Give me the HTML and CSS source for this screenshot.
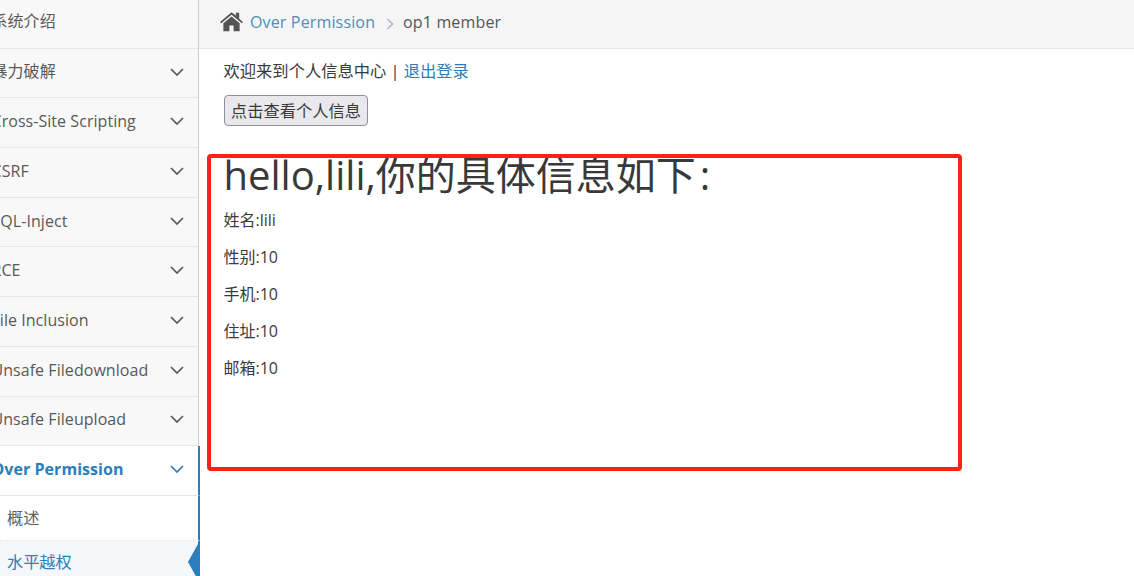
FILE: index.html
```html
<!DOCTYPE html>
<html lang="zh">
<head>
<meta charset="utf-8">
<title>Over Permission</title>
<link rel="stylesheet" href="styles.css">
</head>
<body>
<div class="layout">
  <nav class="sidebar">
    <ul class="menu">
      <li class="item"><span class="label cjk">系统介绍</span></li>
      <li class="item"><span class="label cjk">暴力破解</span><svg class="chev" viewBox="0 0 14 8"><path d="M1 1l6 6 6-6"/></svg></li>
      <li class="item"><span class="label">Cross-Site Scripting</span><svg class="chev" viewBox="0 0 14 8"><path d="M1 1l6 6 6-6"/></svg></li>
      <li class="item"><span class="label">CSRF</span><svg class="chev" viewBox="0 0 14 8"><path d="M1 1l6 6 6-6"/></svg></li>
      <li class="item"><span class="label">SQL-Inject</span><svg class="chev" viewBox="0 0 14 8"><path d="M1 1l6 6 6-6"/></svg></li>
      <li class="item"><span class="label">RCE</span><svg class="chev" viewBox="0 0 14 8"><path d="M1 1l6 6 6-6"/></svg></li>
      <li class="item"><span class="label">File Inclusion</span><svg class="chev" viewBox="0 0 14 8"><path d="M1 1l6 6 6-6"/></svg></li>
      <li class="item"><span class="label">Unsafe Filedownload</span><svg class="chev" viewBox="0 0 14 8"><path d="M1 1l6 6 6-6"/></svg></li>
      <li class="item"><span class="label">Unsafe Fileupload</span><svg class="chev" viewBox="0 0 14 8"><path d="M1 1l6 6 6-6"/></svg></li>
      <li class="item open"><span class="label">Over Permission</span><svg class="chev" viewBox="0 0 14 8"><path d="M1 1l6 6 6-6"/></svg></li>
      <li class="sub">概述</li>
      <li class="sub current">水平越权<span class="pointer"></span></li>
    </ul>
  </nav>
  <main class="main">
    <div class="crumbs">
      <svg class="home" viewBox="0 0 24 20"><path d="M12 1.200 1 10.400l1.100 1.300L12 3.600l9.900 8.100 1.100-1.300-3.600-3V1.600h-3.200v2.700z"/><path d="M12 5.300 4.200 11.700V19.400h5.800v-5.600h4V19.400h5.800V11.700z"/></svg>
      <a class="crumb-link" href="#">Over Permission</a>
      <svg class="sep" viewBox="0 0 8 12"><path d="M1.500 1l5 5-5 5"/></svg>
      <span class="crumb-now">op1 member</span>
    </div>
    <div class="content">
      <p class="welcome">欢迎来到个人信息中心 | <a href="#">退出登录</a></p>
      <button class="btn" type="button">点击查看个人信息</button>
      <h1 class="title">hello,lili,你的具体信息如下<span class="colon">:</span></h1>
      <p class="row">姓名:lili</p>
      <p class="row">性别:10</p>
      <p class="row">手机:10</p>
      <p class="row">住址:10</p>
      <p class="row">邮箱:10</p>
    </div>
  </main>
</div>
<div class="mark"></div>
</body>
</html>
```
FILE: styles.css
```css
* { box-sizing: border-box; }
html, body { margin: 0; height: 100%; overflow: hidden; }
body {
  position: relative;
  background: #fff;
  color: #393939;
  font-family: "Open Sans", "Noto Sans CJK SC", sans-serif;
  font-size: 16px;
}
a { color: #337ab7; text-decoration: none; }
.layout { display: flex; height: 576px; }
.sidebar {
  flex: 0 0 200px;
  height: 576px;
  overflow: hidden;
}
.menu { list-style: none; margin: -1px 0 0; padding: 0; }
.item {
  display: flex;
  align-items: center;
  justify-content: space-between;
  height: 49.7px;
  margin-right: 1px;
  padding: 0 14px 3px 0;
  background: #f8f8f8;
  border-right: 1px solid #ccc;
  border-bottom: 1px solid #e5e5e5;
  color: #585858;
  white-space: nowrap;
}
.label { margin-left: -8.5px; letter-spacing: 0.05px; }
.cjk { padding-bottom: 3px; }
.chev { width: 14px; height: 8px; fill: none; stroke: #585858; stroke-width: 1.7; }
.item.open {
  margin-right: 0;
  background: #fff;
  color: #2b7dbc;
  font-weight: 700;
  border-right: 2px solid #2b7dbc;
}
.item.open .chev { stroke: #2b7dbc; }
.sub {
  position: relative;
  height: 45px;
  padding: 9px 0 0 7px;
  background: #fff;
  color: #616161;
  font-size: 16.2px;
  border-right: 2px solid #2b7dbc;
  border-bottom: 1px dotted #e4e4e4;
}
.sub.current { background: #f5f7fa; color: #2b7dbc; height: 36px; padding-top: 8px; border-bottom: 0; }
.pointer {
  position: absolute;
  right: 0;
  top: 3px;
  border-style: solid;
  border-color: transparent #2b7dbc transparent transparent;
  border-width: 18px 10px 18px 0;
}
.main { flex: 1; min-width: 0; margin-left: -1px; }
.crumbs {
  display: flex;
  align-items: center;
  height: 49px;
  padding: 0 0 5px 20px;
  background: #f5f5f5;
  border-bottom: 1px solid #e5e5e5;
  letter-spacing: 0.15px;
}
.home { width: 25px; height: 21px; fill: #555; margin-right: 6px; }
.crumb-link { color: #4c8fbd; }
.sep { width: 8px; height: 12px; margin: 4px 9px 0 11px; fill: none; stroke: #b2b6bf; stroke-width: 1.6; }
.crumb-now { color: #555; }
.content { padding: 10px 0 0 24.5px; font-size: 16.3px; }
.welcome { margin: 0 0 12px; line-height: 24px; }
.btn {
  display: block;
  width: 144px;
  height: 31px;
  margin-left: 0.5px;
  padding: 0 0 2px;
  font: inherit;
  color: #393939;
  background: #e9e9ed;
  border: 1px solid #8f8f9d;
  border-radius: 4px;
}
.title {
  margin: 25px 0 2px;
  font-size: 40px;
  font-weight: 400;
  line-height: 48px;
  color: #393939;
}
.colon { margin-left: 4px; }
.row { margin: 0; height: 36.9px; line-height: 24px; padding-top: 7px; font-size: 16px; }
.mark {
  position: absolute;
  left: 207px;
  top: 154px;
  width: 755px;
  height: 317px;
  border: 4px solid #ff2016;
  border-radius: 4px;
  pointer-events: none;
}
```
